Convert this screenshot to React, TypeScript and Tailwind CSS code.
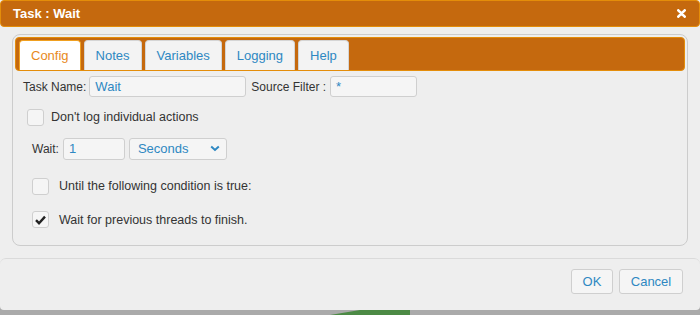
import React from "react";

const tabs = ["Config", "Notes", "Variables", "Logging", "Help"];

const Check: React.FC<{ checked?: boolean }> = ({ checked }) => (
  <span className="flex h-[17px] w-[17px] items-center justify-center rounded-[3px] border border-[#cfcfcf] bg-[#f5f5f5]">
    {checked && (
      <svg width="11" height="10" viewBox="0 0 11 10">
        <path d="M1 5.2 L4 8.2 L10 1.6" fill="none" stroke="#222" strokeWidth="2.4" />
      </svg>
    )}
  </span>
);

export default function App() {
  return (
    <div className="relative h-[315px] w-[700px] overflow-hidden bg-[#aaaaaa] font-['Liberation_Sans',Arial,sans-serif] text-[12px] text-[#333]">
      <svg className="absolute bottom-0 left-[330px]" width="80" height="6" viewBox="0 0 80 6">
        <path d="M0 6 L30 1 L80 0 L80 6 Z" fill="#4c8a45" />
      </svg>

      <div className="relative flex h-[310px] flex-col rounded-b-[4px] bg-[#eeeeee]">
        {/* title bar */}
        <div className="flex h-[27px] items-center justify-between rounded-[4px] border border-[#e48d0a] bg-[#c5690e] pl-[12px] pr-[13px]">
          <span className="text-[13px] font-bold text-white">Task : Wait</span>
          <svg width="9" height="9" viewBox="0 0 9 9">
            <path d="M1.3 1.3 L7.7 7.7 M7.7 1.3 L1.3 7.7" stroke="#fff" strokeWidth="2.6" strokeLinecap="round" />
          </svg>
        </div>

        {/* panel */}
        <div className="mx-[12px] mt-[7px] h-[212px] rounded-[8px] border border-[#cccccc] p-[2px]">
          <div className="flex h-[34px] items-end gap-[3px] rounded-[4px] border border-[#e48d0a] bg-[#c5690e] pl-[3px]">
            {tabs.map((t, i) => (
              <div
                key={t}
                className={`flex h-[30px] items-center rounded-t-[4px] border border-b-0 px-[11px] text-[13px] ${
                  i === 0
                    ? "border-[#f0a020] bg-white text-[#e8891c]"
                    : "border-[#d5d5d5] bg-[#f3f3f3] text-[#2e88c2]"
                }`}
              >
                {t}
              </div>
            ))}
          </div>

          <div className="pl-[8px] pt-[5px]">
            <div className="flex items-center">
              <span>Task Name:</span>
              <div className="ml-[3px] flex h-[21px] w-[157px] items-center rounded-[3px] border border-[#cfcfcf] bg-[#f5f5f5] px-[5px] text-[13px] text-[#2e88c2]">
                Wait
              </div>
              <span className="ml-[5px]">Source Filter :</span>
              <div className="ml-[4px] flex h-[21px] w-[87px] items-center rounded-[3px] border border-[#cfcfcf] bg-[#f5f5f5] px-[5px] text-[13px] text-[#2e88c2]">
                *
              </div>
            </div>

            <div className="mt-[11px] flex items-center pl-[4px] text-[12.5px]">
              <Check />
              <span className="ml-[7px]">Don't log individual actions</span>
            </div>

            <div className="mt-[11px] flex items-center pl-[9px]">
              <span>Wait:</span>
              <div className="ml-[4px] flex h-[22px] w-[62px] items-center rounded-[3px] border border-[#cfcfcf] bg-[#f5f5f5] px-[5px] text-[13px] text-[#2e88c2]">
                1
              </div>
              <div className="ml-[4px] flex h-[22px] w-[98px] items-center justify-between rounded-[3px] border border-[#cfcfcf] bg-[#f5f5f5] pl-[8px] pr-[6px] text-[13px] text-[#2e88c2]">
                <span>Seconds</span>
                <svg width="10" height="7" viewBox="0 0 10 7">
                  <path d="M1.2 1.5 L5 5 L8.8 1.5" fill="none" stroke="#2e88c2" strokeWidth="2" />
                </svg>
              </div>
            </div>

            <div className="mt-[17px] flex items-center pl-[9px] text-[12.5px]">
              <Check />
              <span className="ml-[10px]">Until the following condition is true:</span>
            </div>

            <div className="mt-[15px] flex items-center pl-[9px] text-[12.5px]">
              <Check checked />
              <span className="ml-[10px]">Wait for previous threads to finish.</span>
            </div>
          </div>
        </div>

        {/* footer */}
        <div className="mt-[12px] flex flex-1 items-start justify-end gap-[6px] rounded-t-[6px] border-t border-[#dadada] pr-[17px] pt-[10px]">
          <button className="h-[25px] w-[42px] rounded-[3px] border border-[#cfcfcf] bg-[#f5f5f5] text-[13px] text-[#2e88c2]">
            OK
          </button>
          <button className="h-[25px] w-[64px] rounded-[3px] border border-[#cfcfcf] bg-[#f5f5f5] text-[13px] text-[#2e88c2]">
            Cancel
          </button>
        </div>
      </div>
    </div>
  );
}
